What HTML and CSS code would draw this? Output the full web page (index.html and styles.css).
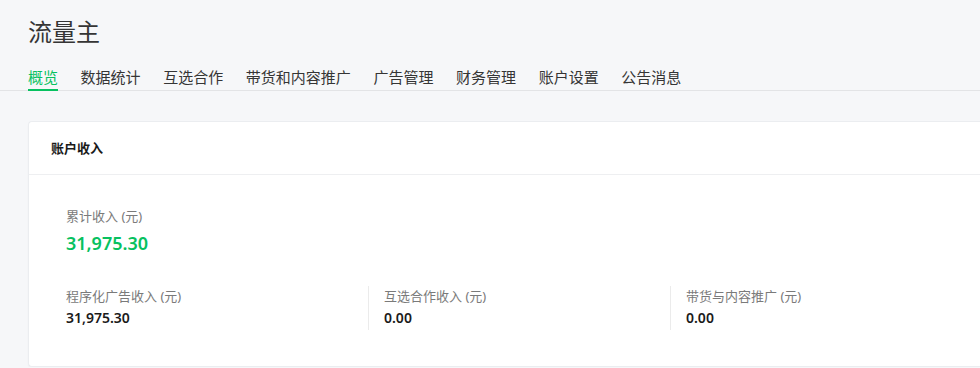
FILE: index.html
```html
<!DOCTYPE html>
<html lang="zh-CN">
<head>
<meta charset="utf-8">
<title>流量主</title>
<link rel="stylesheet" href="styles.css">
</head>
<body>
<div class="page">
  <h1 class="title">流量主</h1>
  <nav class="tabs">
    <a class="tab active">概览</a>
    <a class="tab">数据统计</a>
    <a class="tab">互选合作</a>
    <a class="tab">带货和内容推广</a>
    <a class="tab">广告管理</a>
    <a class="tab">财务管理</a>
    <a class="tab">账户设置</a>
    <a class="tab">公告消息</a>
  </nav>
  <section class="card">
    <div class="card-head">账户收入</div>
    <div class="card-body">
      <div class="total">
        <div class="label">累计收入 (元)</div>
        <div class="total-value">31,975.30</div>
      </div>
      <div class="cols">
        <div class="col">
          <div class="label">程序化广告收入 (元)</div>
          <div class="value">31,975.30</div>
        </div>
        <div class="col">
          <div class="label">互选合作收入 (元)</div>
          <div class="value">0.00</div>
        </div>
        <div class="col">
          <div class="label">带货与内容推广 (元)</div>
          <div class="value">0.00</div>
        </div>
      </div>
    </div>
  </section>
</div>
</body>
</html>
```
FILE: styles.css
```css
html, body {
  margin: 0;
  padding: 0;
  overflow: hidden;
}
body {
  background: #f6f7f9;
  font-family: "Noto Sans", "Noto Sans CJK SC", sans-serif;
  color: #353535;
}
.page {
  padding: 16px 0 0 28px;
}
.title {
  margin: 0;
  font-size: 24px;
  line-height: 32px;
  font-weight: 400;
  color: #353535;
}
.tabs {
  display: flex;
  margin-top: 18px;
  border-bottom: 1px solid #e3e4e6;
  margin-left: -28px;
  padding-left: 28px;
}
.tab {
  font-size: 15px;
  line-height: 22px;
  padding-bottom: 1px;
  border-bottom: 2px solid transparent;
  margin-bottom: -1px;
  margin-right: 22.6px;
  color: #353535;
  cursor: pointer;
}
.tab.active {
  color: #07c160;
  border-bottom-color: #07c160;
}
.card {
  margin-top: 30px;
  background: #fff;
  border: 1px solid #ebedf0;
  border-right: none;
  border-radius: 4px 0 0 4px;
  box-shadow: 0 1px 2px rgba(0,0,0,0.03);
}
.card-head {
  height: 52px;
  line-height: 52px;
  padding: 0 22px;
  font-size: 13px;
  font-weight: 700;
  color: #1a1a1a;
  border-bottom: 1px solid #eeeff1;
}
.card-body {
  padding: 31px 0 36px 37px;
}
.label {
  font-size: 13px;
  line-height: 20px;
  color: #7a7a7a;
}
.total-value {
  margin-top: 3px;
  font-size: 18px;
  line-height: 28px;
  font-weight: 600;
  color: #07c160;
}
.cols {
  display: grid;
  grid-template-columns: 302px 302px 302px;
  margin-top: 29px;
}
.col + .col {
  border-left: 1px solid #ebebeb;
  padding-left: 15px;
}
.value {
  font-size: 14px;
  line-height: 24px;
  font-weight: 600;
  color: #1a1a1a;
}
```
